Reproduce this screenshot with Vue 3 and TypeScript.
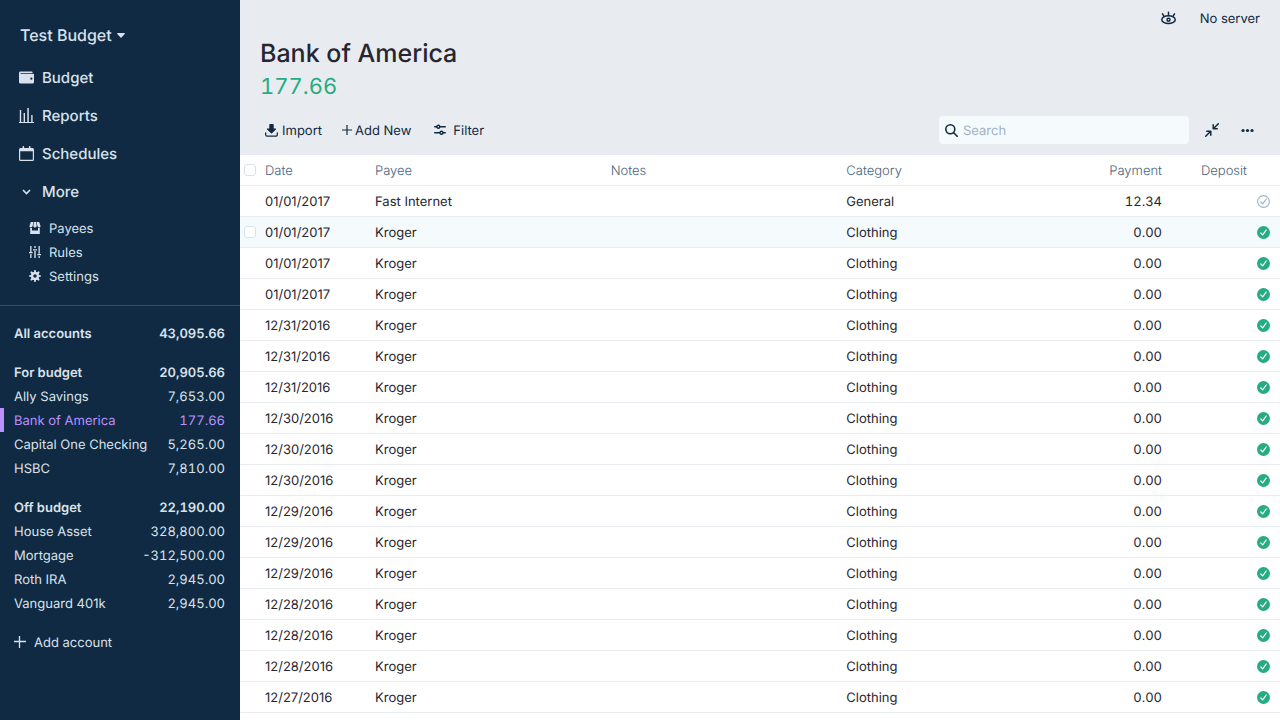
<script setup lang="ts">
import { ref } from 'vue'

interface Account {
  name: string
  balance: string
  total?: boolean
  active?: boolean
}

interface Transaction {
  id: number
  date: string
  payee: string
  notes: string
  category: string
  payment: string
  deposit: string
  cleared: boolean
}

const groups: Account[][] = [
  [{ name: 'All accounts', balance: '43,095.66', total: true }],
  [
    { name: 'For budget', balance: '20,905.66', total: true },
    { name: 'Ally Savings', balance: '7,653.00' },
    { name: 'Bank of America', balance: '177.66', active: true },
    { name: 'Capital One Checking', balance: '5,265.00' },
    { name: 'HSBC', balance: '7,810.00' },
  ],
  [
    { name: 'Off budget', balance: '22,190.00', total: true },
    { name: 'House Asset', balance: '328,800.00' },
    { name: 'Mortgage', balance: '-312,500.00' },
    { name: 'Roth IRA', balance: '2,945.00' },
    { name: 'Vanguard 401k', balance: '2,945.00' },
  ],
]

const krogerDates = [
  '01/01/2017', '01/01/2017', '01/01/2017',
  '12/31/2016', '12/31/2016', '12/31/2016',
  '12/30/2016', '12/30/2016', '12/30/2016',
  '12/29/2016', '12/29/2016', '12/29/2016',
  '12/28/2016', '12/28/2016', '12/28/2016',
  '12/27/2016',
]

const transactions: Transaction[] = [
  { id: 0, date: '01/01/2017', payee: 'Fast Internet', notes: '', category: 'General', payment: '12.34', deposit: '', cleared: false },
  ...krogerDates.map((date, i) => ({
    id: i + 1, date, payee: 'Kroger', notes: '', category: 'Clothing', payment: '0.00', deposit: '', cleared: true,
  })),
]

const highlighted = ref(1)
const search = ref('')
</script>

<template>
  <div class="app">
    <aside class="sidebar">
      <button class="budget-name" type="button">
        Test Budget
        <svg width="8" height="5" viewBox="0 0 8 5"><path d="M.7 0h6.6c.6 0 .8.6.4 1L4.500 4.600a.7.700 0 0 1-1 0L.3 1C-.1.6.1 0 .7 0z" fill="currentColor" /></svg>
      </button>

      <nav class="primary">
        <a href="#budget">
          <svg width="15" height="15" viewBox="0 0 20 20"><path fill="currentColor" d="M0 4c0-1.100.9-2 2-2h15a1 1 0 0 1 1 1v1H2v1h17a1 1 0 0 1 1 1v10a2 2 0 0 1-2 2H2a2 2 0 0 1-2-2V4zm16.500 9a1.500 1.500 0 1 0 0-3 1.500 1.500 0 0 0 0 3z" /></svg>
          Budget
        </a>
        <a href="#reports">
          <svg width="15" height="15" viewBox="0 0 15 15" fill="currentColor"><path d="M0 14h15v1H0zM.8 2h1.400v12H.8zM4.600 5h1.400v9H4.600zM8.300 0h1.500v14H8.300zM12.200 7h1.400v7h-1.400z" /></svg>
          Reports
        </a>
        <a href="#schedules">
          <svg width="15" height="15" viewBox="0 0 15 15" fill="currentColor"><path fill-rule="evenodd" d="M1.500 2H3.500V.8a.8.800 0 0 1 1.600 0V2h4.800V.8a.8.800 0 0 1 1.600 0V2h2A1.500 1.500 0 0 1 15 3.500v10a1.500 1.500 0 0 1-1.500 1.500h-12A1.500 1.500 0 0 1 0 13.500v-10A1.500 1.500 0 0 1 1.500 2zM1.200 5.200v8.600h12.600V5.200z" /></svg>
          Schedules
        </a>
        <button type="button">
          <svg width="15" height="15" viewBox="0 0 15 15"><path d="M4 6l3.500 3.500L11 6" fill="none" stroke="currentColor" stroke-width="1.600" /></svg>
          More
        </button>
      </nav>

      <nav class="secondary">
        <a href="#payees">
          <svg width="12" height="12" viewBox="0 0 20 20" fill="currentColor"><path d="M18 9.870V20H2V9.870a4.250 4.250 0 0 0 3-.38V14h10V9.500a4.260 4.260 0 0 0 3 .370zM3 0h4l-.67 6.030A3.430 3.430 0 0 1 3 9C1.340 9 .42 7.730.95 6.150L3 0zm5 0h4l.7 6.300c.17 1.500-.91 2.700-2.420 2.700h-.560A2.380 2.380 0 0 1 7.300 6.300L8 0zm5 0h4l2.050 6.150C19.580 7.730 18.650 9 17 9a3.420 3.420 0 0 1-3.330-2.970L13 0z" /></svg>
          Payees
        </a>
        <a href="#rules">
          <svg width="12" height="12" viewBox="0 0 12 12" fill="currentColor"><path d="M1.200 0h1.300v6H1.200zM1.200 8h1.300v4H1.200zM0 6h3.700v1.300H0zM5.300 0h1.400v2H5.300zM5.300 5h1.400v7H5.300zM4 3.200h4v1.300H4zM9.500 0h1.300v7.700H9.500zM9.500 10h1.300v2H9.500zM8.300 8h3.700v1.300H8.300z" /></svg>
          Rules
        </a>
        <a href="#settings">
          <svg width="12" height="12" viewBox="0 0 20 20" fill="currentColor"><path d="M3.940 6.500L2.220 3.640l1.420-1.420L6.500 3.940c.52-.3 1.100-.54 1.700-.7L9 0h2l.8 3.240c.6.160 1.180.4 1.700.7l2.860-1.720 1.420 1.420-1.720 2.860c.3.520.540 1.100.700 1.700L20 9v2l-3.240.8c-.16.600-.4 1.180-.7 1.700l1.720 2.860-1.420 1.420-2.860-1.720c-.52.300-1.100.540-1.700.700L11 20H9l-.8-3.240c-.6-.16-1.180-.4-1.700-.7l-2.860 1.720-1.420-1.420 1.720-2.860c-.3-.52-.54-1.100-.7-1.700L0 11V9l3.240-.8c.16-.6.400-1.180.700-1.700zM10 13a3 3 0 1 0 0-6 3 3 0 0 0 0 6z" /></svg>
          Settings
        </a>
      </nav>

      <div class="accounts">
        <div v-for="(group, g) in groups" :key="g" class="group">
          <a
            v-for="account in group"
            :key="account.name"
            href="#account"
            class="account"
            :class="{ total: account.total, active: account.active }"
          >
            <span>{{ account.name }}</span>
            <span class="amount">{{ account.balance }}</span>
          </a>
        </div>
        <button class="add-account" type="button">
          <svg width="12" height="12" viewBox="0 0 12 12"><path d="M5.500 0v12M0 5.500h12" stroke="currentColor" stroke-width="1.300" /></svg>
          Add account
        </button>
      </div>
    </aside>

    <main class="main">
      <div class="titlebar">
        <button type="button" aria-label="Toggle privacy mode">
          <svg width="15" height="15" viewBox="0 0 15 15" fill="none" stroke="currentColor" stroke-width="1.500" stroke-linecap="round"><ellipse cx="7.500" cy="8.700" rx="6.700" ry="3.900" /><circle cx="7.500" cy="8.700" r="1.500" /><path d="M7.500 4.500V1.200M3 5.300L1.500 2.900M12 5.300l1.500-2.400" /></svg>
        </button>
        <button type="button">No server</button>
      </div>

      <header class="header">
        <h1>Bank of America</h1>
        <div class="balance">177.66</div>
        <div class="toolbar">
          <button class="import" type="button">
            <svg width="13" height="13" viewBox="0 0 13 13" fill="currentColor"><path d="M5 0h3a.7.700 0 0 1 .7.700V4.500h1.800c.6 0 .8.600.4 1L7 9.200a.7.700 0 0 1-1 0L2.100 5.500c-.4-.4-.2-1 .4-1h1.800V.7A.7.700 0 0 1 5 0z" /><path d="M.7 9v1.700a1.500 1.500 0 0 0 1.500 1.500h8.600a1.500 1.500 0 0 0 1.500-1.500V9" fill="none" stroke="currentColor" stroke-width="1.300" stroke-linecap="round" /></svg>
            Import
          </button>
          <button class="add" type="button">
            <svg width="10" height="10" viewBox="0 0 10 10"><path d="M5 0v10M0 5h10" stroke="currentColor" stroke-width="1.200" /></svg>
            Add New
          </button>
          <button class="filter" type="button">
            <svg width="12" height="12" viewBox="0 0 12 12" fill="none" stroke="currentColor" stroke-width="1.400" stroke-linecap="round"><path d="M.7 2.700h2M6 2.700h5.300M.7 8.700h5M9.300 8.700h2" /><circle cx="4.300" cy="2.700" r="1.500" /><circle cx="7.500" cy="8.700" r="1.500" /></svg>
            Filter
          </button>
          <label class="search">
            <svg width="13" height="13" viewBox="0 0 13 13" fill="none" stroke="currentColor" stroke-width="1.600" stroke-linecap="round"><circle cx="5.300" cy="5.300" r="4.500" /><path d="M8.700 8.700l3.500 3.500" /></svg>
            <input v-model="search" type="text" placeholder="Search" aria-label="Search">
          </label>
          <button class="icon-button" type="button" aria-label="Collapse split transactions">
            <svg width="14" height="14" viewBox="0 0 14 14" fill="none" stroke="currentColor" stroke-width="1.500" stroke-linecap="round" stroke-linejoin="round"><path d="M13.300.7L8.300 5.700M8.200 1.800v4h4M.7 13.300l5-5M1.800 8.200h4v4" /></svg>
          </button>
          <button class="icon-button" type="button" aria-label="Menu">
            <svg width="13" height="13" viewBox="0 0 13 13" fill="currentColor"><circle cx="2" cy="6.500" r="1.600" /><circle cx="6.500" cy="6.500" r="1.600" /><circle cx="11" cy="6.500" r="1.600" /></svg>
          </button>
        </div>
      </header>

      <table class="transactions">
        <colgroup>
          <col class="col-select"><col class="col-date"><col><col><col>
          <col class="col-payment"><col class="col-deposit"><col class="col-cleared">
        </colgroup>
        <thead>
          <tr>
            <th class="select"><input type="checkbox" aria-label="Select all"></th>
            <th>Date</th>
            <th>Payee</th>
            <th>Notes</th>
            <th>Category</th>
            <th class="right">Payment</th>
            <th class="right">Deposit</th>
            <th></th>
          </tr>
        </thead>
        <tbody>
          <tr
            v-for="t in transactions"
            :key="t.id"
            :class="{ highlighted: highlighted === t.id }"
            @mouseenter="highlighted = t.id"
          >
            <td class="select"><input v-if="highlighted === t.id" type="checkbox" aria-label="Select transaction"></td>
            <td>{{ t.date }}</td>
            <td>{{ t.payee }}</td>
            <td>{{ t.notes }}</td>
            <td>{{ t.category }}</td>
            <td class="right amount">{{ t.payment }}</td>
            <td class="right amount">{{ t.deposit }}</td>
            <td class="status">
              <svg v-if="t.cleared" class="cleared" width="13" height="13" viewBox="0 0 13 13"><circle cx="6.500" cy="6.500" r="6.500" fill="currentColor" /><path d="M3.800 7l1.900 1.900L9.200 4" fill="none" stroke="#fff" stroke-width="1.200" stroke-linecap="round" stroke-linejoin="round" /></svg>
              <svg v-else class="uncleared" width="13" height="13" viewBox="0 0 13 13" fill="none" stroke="currentColor" stroke-linecap="round" stroke-linejoin="round"><circle cx="6.500" cy="6.500" r="5.900" stroke-width="1.100" /><path d="M3.800 7l1.900 1.900L9.200 4" stroke-width="1.200" /></svg>
            </td>
          </tr>
        </tbody>
      </table>
    </main>
  </div>
</template>

<style>
body {
  margin: 0;
}
</style>

<style scoped>
.app {
  display: flex;
  height: 100vh;
  overflow: hidden;
  background: #fff;
  color: #272630;
  font-family: Inter, "Liberation Sans", sans-serif;
  font-size: 13px;
  line-height: 16px;
  text-rendering: geometricPrecision;
}

* {
  box-sizing: border-box;
}

svg {
  display: block;
  flex: none;
}

button {
  display: flex;
  align-items: center;
  margin: 0;
  padding: 0;
  border: 0;
  background: none;
  color: inherit;
  font: inherit;
  text-rendering: inherit;
  cursor: pointer;
}

a {
  color: inherit;
  text-decoration: none;
}

.amount {
  font-feature-settings: "tnum";
}

.sidebar {
  flex: none;
  width: 240px;
  background: #102a43;
  color: #d9e2ec;
}

.budget-name {
  gap: 5px;
  height: 30px;
  margin: 20px 0 9px 20px;
  font-size: 16px;
  font-weight: 500;
}

.primary a,
.primary button {
  display: flex;
  align-items: center;
  gap: 8px;
  width: 100%;
  height: 38px;
  padding-left: 19px;
  font-size: 15px;
  font-weight: 500;
}

.primary svg {
  margin-bottom: 1px;
}

.secondary {
  padding: 5px 0 17px;
  border-bottom: 1px solid #334e68;
}

.secondary a {
  display: flex;
  align-items: center;
  gap: 8px;
  height: 24px;
  padding: 2px 0 0 29px;
}

.secondary svg,
.add-account svg,
.titlebar svg,
.toolbar button svg {
  margin-bottom: 2px;
}

.accounts {
  padding-top: 15px;
}

.group {
  margin-bottom: 15px;
}

.account {
  display: flex;
  align-items: center;
  justify-content: space-between;
  height: 24px;
  padding: 2px 15px 0 10px;
  border-left: 4px solid transparent;
}

.account.total {
  font-weight: 600;
}

.account.active {
  border-color: #b990ff;
  color: #b990ff;
}

.add-account {
  gap: 8px;
  height: 24px;
  padding: 2px 0 0 14px;
}

.main {
  flex: 1;
  min-width: 0;
}

.titlebar {
  display: flex;
  align-items: center;
  justify-content: flex-end;
  gap: 24px;
  height: 36px;
  padding: 2px 20px 0;
  background: #e8ecf0;
  color: #102a43;
}

.header {
  padding: 1px 20px 11px;
  background: #e8ecf0;
}

h1 {
  margin: 0;
  font-size: 25px;
  line-height: 34px;
  font-weight: 500;
}

.balance {
  margin-bottom: 13px;
  color: #27ab83;
  font-size: 22px;
  line-height: 32px;
  font-feature-settings: "tnum";
}

.toolbar {
  display: flex;
  align-items: center;
  height: 28px;
  padding-left: 5px;
  color: #102a43;
}

.toolbar button {
  height: 28px;
  padding-top: 2px;
}

.import {
  gap: 4px;
  margin-right: 20px;
}

.add {
  gap: 3px;
  margin-right: 23px;
}

.filter {
  gap: 7px;
}

.search {
  display: flex;
  align-items: center;
  gap: 5px;
  width: 250px;
  height: 28px;
  margin-left: auto;
  margin-right: 9px;
  padding: 0 6px;
  border-radius: 4px;
  background: #f5fafd;
}

.search input {
  flex: 1;
  min-width: 0;
  padding: 2px 0 0;
  border: 0;
  outline: 0;
  background: none;
  color: #272630;
  font: inherit;
  text-rendering: inherit;
}

.search input::placeholder {
  color: #9fb3c8;
}

.icon-button {
  justify-content: center;
  width: 28px;
}

.icon-button + .icon-button {
  margin-left: 7px;
  margin-right: -1px;
}

.transactions {
  width: 100%;
  table-layout: fixed;
  border-collapse: separate;
  border-spacing: 0;
}

.col-select {
  width: 20px;
}

.col-date {
  width: 110px;
}

.col-payment {
  width: 90px;
}

.col-deposit {
  width: 85px;
}

.col-cleared {
  width: 28px;
}

th,
td {
  height: 31px;
  padding: 2px 5px 0;
  border-bottom: 1px solid #e8ecf0;
  text-align: left;
  vertical-align: middle;
  white-space: nowrap;
}

th {
  color: #486581;
  font-weight: 300;
}

th.right,
td.right {
  text-align: right;
}

th.select,
td.select {
  padding: 0 4px;
}

td.status {
  padding: 0 5px;
}

.highlighted td {
  background: #f5fafd;
}

input[type="checkbox"] {
  display: block;
  appearance: none;
  width: 12px;
  height: 12px;
  margin: 0;
  border: 1px solid #d9e2ec;
  border-radius: 3px;
  background: #fff;
}

.cleared {
  color: #27ab83;
}

.uncleared {
  color: #9fb3c8;
}
</style>
